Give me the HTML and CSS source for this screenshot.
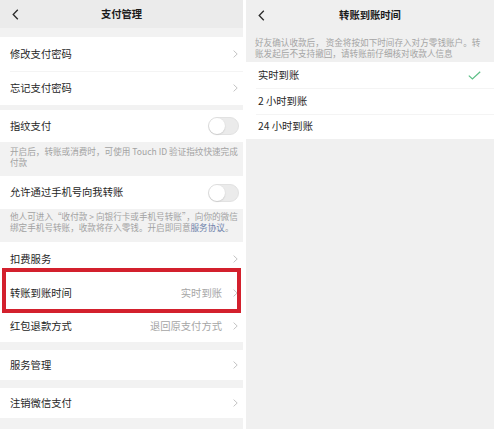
FILE: index.html
```html
<!DOCTYPE html>
<html lang="zh-CN">
<head>
<meta charset="utf-8">
<title>支付管理</title>
<link rel="stylesheet" href="styles.css">
</head>
<body>
<div class="screens">
  <section class="phone phone-left">
    <header class="nav">
      <svg class="back" width="7" height="11" viewBox="0 0 7 11"><polyline points="5.8,0.8 1.2,5.5 5.8,10.2" fill="none" stroke="#2a2a2a" stroke-width="1.3"/></svg>
      <h1 class="nav-title">支付管理</h1>
      <span></span>
    </header>

    <div class="card card-pw">
      <div class="row h34"><span class="label">修改支付密码</span><span class="chev"><svg width="5" height="8" viewBox="0 0 5 8"><polyline points="0.6,0.6 4.2,4 0.6,7.4" fill="none" stroke="#c4c4c4" stroke-width="1"/></svg></span></div>
      <div class="row h34 divided"><span class="label">忘记支付密码</span><span class="chev"><svg width="5" height="8" viewBox="0 0 5 8"><polyline points="0.6,0.6 4.2,4 0.6,7.4" fill="none" stroke="#c4c4c4" stroke-width="1"/></svg></span></div>
    </div>

    <div class="card card-finger">
      <div class="row h32"><span class="label">指纹支付</span><span class="toggle"><span class="knob"></span></span></div>
    </div>
    <p class="note note-finger">开启后，转账或消费时，可使用 Touch ID 验证指纹快速完成<br>付款</p>

    <div class="card">
      <div class="row h33"><span class="label">允许通过手机号向我转账</span><span class="toggle"><span class="knob"></span></span></div>
    </div>
    <p class="note note-phone">他人可进入“收付款 &gt; 向银行卡或手机号转账”，向你的微信<br>绑定手机号转账，收款将存入零钱。开启即同意<span class="link">服务协议</span>。</p>

    <div class="card">
      <div class="row h34"><span class="label">扣费服务</span><span class="chev"><svg width="5" height="8" viewBox="0 0 5 8"><polyline points="0.6,0.6 4.2,4 0.6,7.4" fill="none" stroke="#c4c4c4" stroke-width="1"/></svg></span></div>
      <div class="row h34 highlighted"><span class="label">转账到账时间</span><span class="value">实时到账</span><span class="chev"><svg width="5" height="8" viewBox="0 0 5 8"><polyline points="0.6,0.6 4.2,4 0.6,7.4" fill="none" stroke="#c4c4c4" stroke-width="1"/></svg></span><span class="redbox"></span></div>
      <div class="row h32"><span class="label">红包退款方式</span><span class="value">退回原支付方式</span><span class="chev"><svg width="5" height="8" viewBox="0 0 5 8"><polyline points="0.6,0.6 4.2,4 0.6,7.4" fill="none" stroke="#c4c4c4" stroke-width="1"/></svg></span></div>
    </div>

    <div class="card gap8">
      <div class="row h30"><span class="label">服务管理</span><span class="chev"><svg width="5" height="8" viewBox="0 0 5 8"><polyline points="0.6,0.6 4.2,4 0.6,7.4" fill="none" stroke="#c4c4c4" stroke-width="1"/></svg></span></div>
    </div>
    <div class="card gap8">
      <div class="row h30"><span class="label">注销微信支付</span><span class="chev"><svg width="5" height="8" viewBox="0 0 5 8"><polyline points="0.6,0.6 4.2,4 0.6,7.4" fill="none" stroke="#c4c4c4" stroke-width="1"/></svg></span></div>
    </div>
  </section>

  <section class="phone phone-right">
    <header class="nav nav-right">
      <svg class="back" width="7" height="11" viewBox="0 0 7 11"><polyline points="5.8,0.8 1.2,5.5 5.8,10.2" fill="none" stroke="#2a2a2a" stroke-width="1.3"/></svg>
      <h1 class="nav-title">转账到账时间</h1>
      <span></span>
    </header>
    <p class="note note-right">好友确认收款后， 资金将按如下时间存入对方零钱账户。转<br>账发起后不支持撤回，请转账前仔细核对收款人信息</p>
    <div class="card options">
      <div class="row opt h26"><span class="label">实时到账</span><svg class="check" width="13" height="9" viewBox="0 0 13 9"><polyline points="0.8,4.6 4.4,8 12.2,0.8" fill="none" stroke="#5cbf86" stroke-width="1.2"/></svg></div>
      <div class="row opt h26 divided"><span class="label">2 小时到账</span></div>
      <div class="row opt h25 divided"><span class="label">24 小时到账</span></div>
    </div>
  </section>
</div>
</body>
</html>
```

FILE: styles.css
```css
* { box-sizing: border-box; margin: 0; padding: 0; }

html, body {
  width: 500px;
  height: 429px;
  background: #ffffff;
  overflow: hidden;
}

body {
  font-family: "Noto Sans CJK SC", "Noto Sans", sans-serif;
  color: #262626;
}

.screens {
  display: flex;
  height: 429px;
}

.phone {
  height: 429px;
  background: #f2f2f2;
  overflow: hidden;
}

.phone-left {
  width: 243px;
  margin-right: 3px;
}

.phone-right {
  width: 248px;
  background: #f0f0f0;
}

.nav {
  height: 28px;
  background: #ebebeb;
  display: grid;
  grid-template-columns: 1fr auto 1fr;
  align-items: center;
  padding-left: 12px;
}

.nav-right {
  height: 30px;
  background: #efefef;
  padding-left: 12px;
}

.back { display: block; }

.nav-title {
  font-size: 10.3px;
  font-weight: 700;
  color: #1a1a1a;
  line-height: 1;
  margin-right: 12px;
}

.card {
  background: #ffffff;
}

.card-pw { margin-top: 9px; }
.card-finger { margin-top: 5px; }
.gap8 { margin-top: 8px; }

.row {
  display: flex;
  align-items: center;
  padding: 0 5px 0 10px;
  font-size: 10.3px;
  position: relative;
}

.h34 { height: 34px; }
.h33 { height: 33px; }
.h32 { height: 32px; }
.h30 { height: 30px; }
.h26 { height: 26px; }
.h25 { height: 25px; }

.divided::before {
  content: "";
  position: absolute;
  top: 0;
  left: 10px;
  right: 0;
  height: 1px;
  background: #f4f4f4;
}

.label {
  flex: 1;
  line-height: 1;
  color: #262626;
}

.value {
  color: #a6a6a6;
  line-height: 1;
  margin-right: 11px;
}

.chev {
  display: flex;
  width: 5px;
}
.chev svg { display: block; }

.toggle {
  width: 31px;
  height: 18px;
  border-radius: 9px;
  background: #ebebeb;
  border: 1px solid #e2e2e2;
  position: relative;
  margin-right: -1px;
}

.knob {
  position: absolute;
  top: 0;
  left: 0;
  width: 16px;
  height: 16px;
  border-radius: 50%;
  background: #ffffff;
  box-shadow: 0 0.5px 1.5px rgba(0,0,0,0.18);
}

.note {
  font-size: 8.6px;
  line-height: 11px;
  color: #a2a2a2;
  padding: 0 4px 0 10px;
  white-space: nowrap;
}

.note-finger { height: 34px; padding-top: 4px; }
.note-phone { height: 33px; padding-top: 2px; }

.link { color: #7083ab; }

.redbox {
  position: absolute;
  left: 2px;
  right: 2px;
  top: -8px;
  bottom: -3px;
  border: 4px solid #d3202d;
  pointer-events: none;
}

.note-right {
  height: 32px;
  padding: 7px 4px 0 9px;
  line-height: 10.5px;
  color: #a4a4a4;
}

.opt { padding: 0 13px 0 12px; }

.check { display: block; }
```
